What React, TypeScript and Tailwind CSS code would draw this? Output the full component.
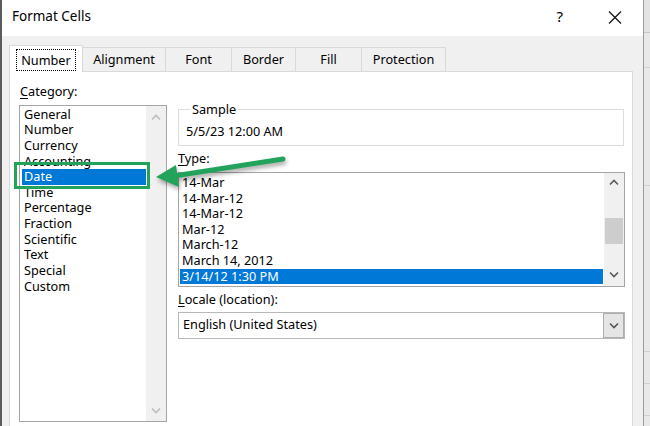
import React from 'react';

const categories = ['General', 'Number', 'Currency', 'Accounting', 'Date', 'Time', 'Percentage', 'Fraction', 'Scientific', 'Text', 'Special', 'Custom'];
const types = ['14-Mar', '14-Mar-12', '14-Mar-12', 'Mar-12', 'March-12', 'March 14, 2012', '3/14/12 1:30 PM'];
const tabs = [
  { label: 'Number', w: 'w-[74px]' },
  { label: 'Alignment', w: 'w-[84px]' },
  { label: 'Font', w: 'w-[67px]' },
  { label: 'Border', w: 'w-[65px]' },
  { label: 'Fill', w: 'w-[67px]' },
  { label: 'Protection', w: 'w-[85px]' },
];

function Chevron({ up, color }: { up?: boolean; color: string }) {
  return (
    <svg width="10" height="7" viewBox="0 0 10 7">
      <path d={up ? 'M1 5.5 L5 1.5 L9 5.5' : 'M1 1.5 L5 5.5 L9 1.5'} fill="none" stroke={color} strokeWidth="1.6" />
    </svg>
  );
}

export default function App() {
  return (
    <div className="relative w-[650px] h-[426px] flex overflow-hidden bg-[#e8e8e8] text-black text-[12.7px] leading-[15.64px]" style={{ fontFamily: '"Noto Sans", "Open Sans", sans-serif' }}>
      <div className="w-[2px] bg-[#5c5c5c]" />
      <div className="w-[641px] flex flex-col bg-[#f0f0f0]">
        {/* title bar */}
        <div className="h-[36px] bg-white flex items-center pl-[10px] pr-[21px] pb-[2px]">
          <span className="text-[13.5px]">Format Cells</span>
          <span className="ml-auto text-[15px]">?</span>
          <svg className="ml-[45px]" width="14" height="13" viewBox="0 0 14 13">
            <path d="M1 0.5 L13 12.5 M13 0.5 L1 12.5" stroke="#111" strokeWidth="1.2" />
          </svg>
        </div>
        {/* body */}
        <div className="flex-1 flex flex-col pl-[7px] pr-[10px] pt-[9px]">
          <div className="flex items-end">
            {tabs.map((t, i) =>
              i === 0 ? (
                <div key={t.label} className={`${t.w} h-[27px] -mb-px relative z-10 bg-white border border-b-0 border-[#d9d9d9] flex justify-center pt-[3px]`}>
                  <span className="h-[22px] px-[4px] border border-dotted border-black leading-[20px]">{t.label}</span>
                </div>
              ) : (
                <div key={t.label} className={`${t.w} -ml-px h-[24px] border border-b-0 border-[#d9d9d9] flex items-center justify-center pt-[1px]`}>
                  {t.label}
                </div>
              )
            )}
          </div>
          <div className="flex-1 bg-white border border-b-0 border-[#d9d9d9] flex pl-[9px] pr-[7px]">
            {/* category column */}
            <div className="w-[148px] flex flex-col pt-[12px]">
              <div className="pl-[1px]"><span className="underline underline-offset-2">C</span>ategory:</div>
              <div className="mt-[5px] h-[317px] border border-[#a5a5a5] flex">
                <div className="flex-1 pt-[1px] pl-[2px]">
                  {categories.map(c => (
                    <div key={c} className={`h-[15.64px] pl-[2px] ${c === 'Date' ? 'bg-[#0078d7] text-white' : ''}`}>{c}</div>
                  ))}
                </div>
                <div className="w-[20px] bg-[#f0f0f0] flex flex-col items-center justify-between pt-[8px] pb-[7px]">
                  <Chevron up color="#bcbcbc" />
                  <Chevron color="#bcbcbc" />
                </div>
              </div>
            </div>
            {/* right column */}
            <div className="ml-[11px] flex-1 flex flex-col pt-[30px]">
              <fieldset className="border border-[#dcdcdc] px-[7px] pt-[6px] pb-[6px] mr-[1px]">
                <legend className="ml-[4px] px-[2px]">Sample</legend>
                <div>5/5/23 12:00 AM</div>
              </fieldset>
              <div className="mt-[5px]"><span className="underline underline-offset-2">T</span>ype:</div>
              <div className="mt-[5px] h-[115px] border border-[#a5a5a5] flex">
                <div className="flex-1 pt-[2px] pl-[1px] pr-[1px]">
                  {types.map((t, i) => (
                    <div key={i} className={`h-[15.64px] pl-[2px] ${i === types.length - 1 ? 'bg-[#0078d7] text-white' : ''}`}>{t}</div>
                  ))}
                </div>
                <div className="w-[20px] bg-[#f0f0f0] flex flex-col">
                  <div className="h-[17px] flex items-center justify-center pt-[2px]"><Chevron up color="#5a5a5a" /></div>
                  <div className="flex-1 pt-[28px] px-[1px]">
                    <div className="h-[26px] bg-[#cdcdcd]" />
                  </div>
                  <div className="h-[17px] flex items-center justify-center pb-[6px]"><Chevron color="#5a5a5a" /></div>
                </div>
              </div>
              <div className="mt-[5px]"><span className="underline underline-offset-2">L</span>ocale (location):</div>
              <div className="mt-[4px] h-[27px] border border-[#b8b8b8] flex items-center">
                <div className="flex-1 pl-[4px]">English (United States)</div>
                <div className="w-[21px] h-[25px] bg-[#e5e5e5] border border-[#adadad] flex items-center justify-center">
                  <Chevron color="#555" />
                </div>
              </div>
            </div>
          </div>
        </div>
      </div>
      <div className="flex-1 border-l border-[#9c9c9c] flex flex-col">
        <div className="h-[33px] border-b border-[#c6c6c6] bg-[#e3e3e3]" />
        <div className="h-[35px] border-b border-[#d0d0d0]" />
        <div className="h-[118px] border-b border-[#d0d0d0]" />
        <div className="h-[166px] border-b border-[#d0d0d0]" />
        <div className="h-[32px] border-b border-[#d0d0d0]" />
        <div className="h-[32px] border-b border-[#d0d0d0]" />
      </div>

      {/* annotation: highlight box */}
      <div className="absolute left-[14px] top-[162px] w-[136px] h-[27px] border-[3px] border-[#22a35c]" />
      {/* annotation: arrow */}
      <svg className="absolute left-[150px] top-[150px]" width="145" height="45" viewBox="0 0 145 45" style={{ filter: 'drop-shadow(1px 3px 2px rgba(0,0,0,0.35))' }}>
        <path d="M133 9 L24 26" stroke="#22a35c" strokeWidth="5" strokeLinecap="round" fill="none" />
        <path d="M6 27 L26 15 L29 37 Z" fill="#22a35c" />
      </svg>
    </div>
  );
}
